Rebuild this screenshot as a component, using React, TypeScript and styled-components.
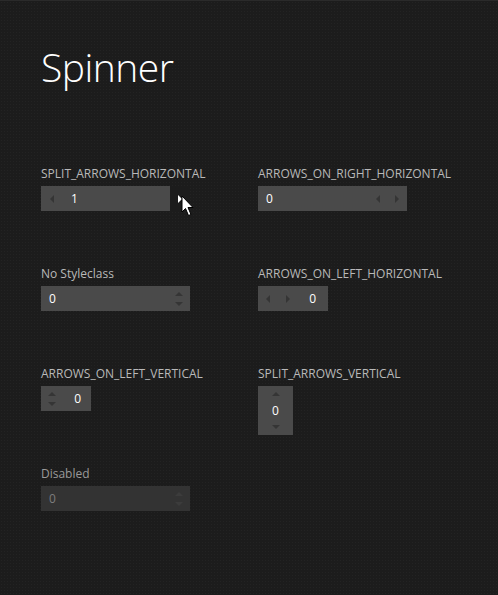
import React from "react";
import styled, { createGlobalStyle, css } from "styled-components";

const Global = createGlobalStyle`
    html, body {
        margin: 0;
        padding: 0;
        background: #1c1c1c;
    }
    #root {
        min-height: 595px;
    }
`;

const Page = styled.div`
    width: 498px;
    height: 595px;
    box-sizing: border-box;
    border-top: 1px solid #2a2a2a;
    background-color: #1c1c1c;
    background-image: radial-gradient(#232323 0.6px, transparent 0.7px);
    background-size: 3px 3px;
    padding: 0 0 0 41px;
    font-family: "Open Sans", "Noto Sans", sans-serif;
    position: relative;
    overflow: hidden;
`;

const Title = styled.h1`
    margin: 0;
    padding-top: 38px;
    height: 165px;
    box-sizing: border-box;
    font-family: "Open Sans", sans-serif;
    font-weight: 300;
    font-size: 39px;
    line-height: 56px;
    color: #ffffff;
    letter-spacing: -0.5px;
`;

const Grid = styled.div`
    display: grid;
    grid-template-columns: 217px 200px;
    grid-auto-rows: 100px;
`;

const Cell = styled.div`
    display: flex;
    flex-direction: column;
    align-items: flex-start;
`;

const Label = styled.div<{ $dim?: boolean }>`
    font-size: 12px;
    line-height: 16px;
    height: 16px;
    margin-bottom: 4px;
    color: ${(p) => (p.$dim ? "#9a9a9a" : "#b9b9b9")};
    white-space: nowrap;
`;

const Box = styled.div<{ $w: number; $h?: number; $disabled?: boolean; $column?: boolean; $bare?: boolean }>`
    width: ${(p) => p.$w}px;
    height: ${(p) => p.$h ?? 25}px;
    display: flex;
    flex-direction: ${(p) => (p.$column ? "column" : "row")};
    align-items: stretch;
    background: ${(p) => (p.$bare ? "transparent" : p.$disabled ? "#333333" : "#4a4a4a")};
`;

const Value = styled.div<{ $disabled?: boolean; $align?: string; $pad?: string }>`
    flex: 1;
    display: flex;
    align-items: center;
    justify-content: ${(p) => p.$align ?? "flex-start"};
    padding: ${(p) => p.$pad ?? "0 0 0 8px"};
    font-size: 12px;
    color: ${(p) => (p.$disabled ? "#7d7d7d" : "#ffffff")};
`;

const ArrowButton = styled.div<{ $w?: number; $hovered?: boolean; $grow?: boolean }>`
    width: ${(p) => (p.$w ? `${p.$w}px` : "auto")};
    ${(p) => p.$grow && "flex: 1;"}
    display: flex;
    align-items: center;
    justify-content: center;
    background: ${(p) => (p.$hovered ? "#1c1c1c" : "transparent")};
`;

const Stack = styled.div<{ $w: number }>`
    width: ${(p) => p.$w}px;
    display: flex;
    flex-direction: column;
    justify-content: center;
    align-items: center;
    gap: 6px;
`;

type Dir = "up" | "down" | "left" | "right";

const Arrow = styled.span<{ $dir: Dir; $light?: boolean; $faint?: boolean }>`
    width: 0;
    height: 0;
    display: block;
    ${(p) => {
        const c = p.$light ? "#ffffff" : p.$faint ? "#3c3c3c" : "#353535";
        switch (p.$dir) {
            case "up":
                return css`
                    border-left: 4px solid transparent;
                    border-right: 4px solid transparent;
                    border-bottom: 4px solid ${c};
                `;
            case "down":
                return css`
                    border-left: 4px solid transparent;
                    border-right: 4px solid transparent;
                    border-top: 4px solid ${c};
                `;
            case "left":
                return css`
                    border-top: 4px solid transparent;
                    border-bottom: 4px solid transparent;
                    border-right: 4px solid ${c};
                `;
            case "right":
                return css`
                    border-top: 4px solid transparent;
                    border-bottom: 4px solid transparent;
                    border-left: 4px solid ${c};
                `;
        }
    }}
`;

const Cursor = styled.svg`
    position: absolute;
    left: 181px;
    top: 194px;
    pointer-events: none;
`;

export default function App() {
    return (
        <>
            <Global />
            <Page>
                <Title>Spinner</Title>
                <Grid>
                    <Cell>
                        <Label>SPLIT_ARROWS_HORIZONTAL</Label>
                        <Box $w={149} $bare>
                            <Box $w={129}>
                                <ArrowButton $w={22}>
                                    <Arrow $dir="left" />
                                </ArrowButton>
                                <Value $pad="0 0 0 8px">1</Value>
                            </Box>
                            <ArrowButton $w={20} $hovered>
                                <Arrow $dir="right" $light />
                            </ArrowButton>
                        </Box>
                    </Cell>
                    <Cell>
                        <Label>ARROWS_ON_RIGHT_HORIZONTAL</Label>
                        <Box $w={149}>
                            <Value>0</Value>
                            <ArrowButton $w={18}>
                                <Arrow $dir="left" />
                            </ArrowButton>
                            <ArrowButton $w={20}>
                                <Arrow $dir="right" />
                            </ArrowButton>
                        </Box>
                    </Cell>

                    <Cell>
                        <Label>No Styleclass</Label>
                        <Box $w={149}>
                            <Value>0</Value>
                            <Stack $w={22}>
                                <Arrow $dir="up" />
                                <Arrow $dir="down" />
                            </Stack>
                        </Box>
                    </Cell>
                    <Cell>
                        <Label>ARROWS_ON_LEFT_HORIZONTAL</Label>
                        <Box $w={70}>
                            <ArrowButton $w={20}>
                                <Arrow $dir="left" />
                            </ArrowButton>
                            <ArrowButton $w={20}>
                                <Arrow $dir="right" />
                            </ArrowButton>
                            <Value $align="flex-end" $pad="0 12px 0 0">
                                0
                            </Value>
                        </Box>
                    </Cell>

                    <Cell>
                        <Label>ARROWS_ON_LEFT_VERTICAL</Label>
                        <Box $w={50}>
                            <Stack $w={22}>
                                <Arrow $dir="up" />
                                <Arrow $dir="down" />
                            </Stack>
                            <Value $align="flex-end" $pad="0 10px 0 0">
                                0
                            </Value>
                        </Box>
                    </Cell>
                    <Cell>
                        <Label>SPLIT_ARROWS_VERTICAL</Label>
                        <Box $w={35} $h={49} $column>
                            <ArrowButton $grow>
                                <Arrow $dir="up" />
                            </ArrowButton>
                            <Value $align="center" $pad="0">
                                0
                            </Value>
                            <ArrowButton $grow>
                                <Arrow $dir="down" />
                            </ArrowButton>
                        </Box>
                    </Cell>

                    <Cell>
                        <Label $dim>Disabled</Label>
                        <Box $w={149} $disabled>
                            <Value $disabled>0</Value>
                            <Stack $w={22}>
                                <Arrow $dir="up" $faint />
                                <Arrow $dir="down" $faint />
                            </Stack>
                        </Box>
                    </Cell>
                </Grid>
                <Cursor width="14" height="22" viewBox="0 0 14 22">
                    <path
                        d="M1 1 L1 17 L4.5 13.5 L7.5 20.5 L10 19.5 L7 12.5 L12 12.5 Z"
                        fill="#ffffff"
                        stroke="#000000"
                        strokeWidth="1"
                        strokeLinejoin="round"
                    />
                </Cursor>
            </Page>
        </>
    );
}
